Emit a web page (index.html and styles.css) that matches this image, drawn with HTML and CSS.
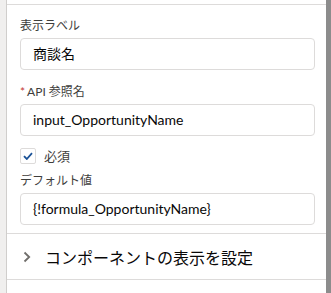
FILE: index.html
```html
<!DOCTYPE html>
<html lang="ja">
<head>
  <meta charset="UTF-8" />
  <title>画面コンポーネント</title>
  <link rel="stylesheet" href="styles.css">
</head>
<body>
  <div class="page">
    <div class="strip"></div>

    <div class="panel">
      <div class="fields">
        <label class="label">表示ラベル</label>
        <div class="input">商談名</div>

        <label class="label"><span class="req">*</span>API 参照名</label>
        <div class="input">input_OpportunityName</div>

        <div class="check">
          <span class="box">
            <svg width="10" height="8" viewBox="0 0 10 8"><path d="M1 4.2 L3.8 7 L9 1.2" fill="none" stroke="#1b5297" stroke-width="1.8"/></svg>
          </span>
          <span>必須</span>
        </div>

        <label class="label">デフォルト値</label>
        <div class="input last">{!formula_OpportunityName}</div>
      </div>

      <div class="section">
        <svg class="chev" width="8" height="12" viewBox="0 0 8 12"><path d="M1.5 1.5 L6.2 6 L1.5 10.5" fill="none" stroke="#706e6b" stroke-width="1.8"/></svg>
        <span>コンポーネントの表示を設定</span>
      </div>

      <div class="section next">
        <span>詳細設定</span>
      </div>
    </div>

    <div class="scroll"></div>
  </div>
</body>
</html>
```

FILE: styles.css
```css
body { margin: 0; font-family: Lato, "Noto Sans CJK JP", sans-serif; overflow: hidden; }
.page { display: flex; height: 293px; overflow: hidden; }
.strip { width: 6px; background: #f0efee; border-right: 1px solid #d0cecc; }
.panel { flex: 1; padding-top: 4px; background: #fff; overflow: hidden; }
.fields { border-top: 1px solid #dddbda; padding: 12px 11px 8px 13px; border-bottom: 1px solid #dddbda; }
.label { display: block; font-size: 12px; line-height: 18px; color: #3e3e3c; margin-bottom: 3px; }
.req { color: #c23934; font-size: 12px; margin-right: 2px; }
.input { border: 1px solid #dddbda; border-radius: 4px; height: 30px; line-height: 30px; padding: 0 12px; font-size: 14px; color: #080707; margin-bottom: 13px; }
.input.last { margin-bottom: 0; }
.check { display: flex; align-items: center; gap: 8px; font-size: 13px; color: #3e3e3c; margin: -3px 0 7px; }
.box { width: 14px; height: 14px; border: 1px solid #dddbda; border-radius: 2px; display: flex; align-items: center; justify-content: center; }
.section { display: flex; align-items: center; gap: 14px; height: 45px; padding-left: 16px; font-size: 16px; color: #080707; border-bottom: 1px solid #dddbda; }
.next { align-items: flex-start; padding: 8px 0 0 38px; color: #3e3e3c; }
.scroll { width: 5px; background: #8c8c8c; }
```
